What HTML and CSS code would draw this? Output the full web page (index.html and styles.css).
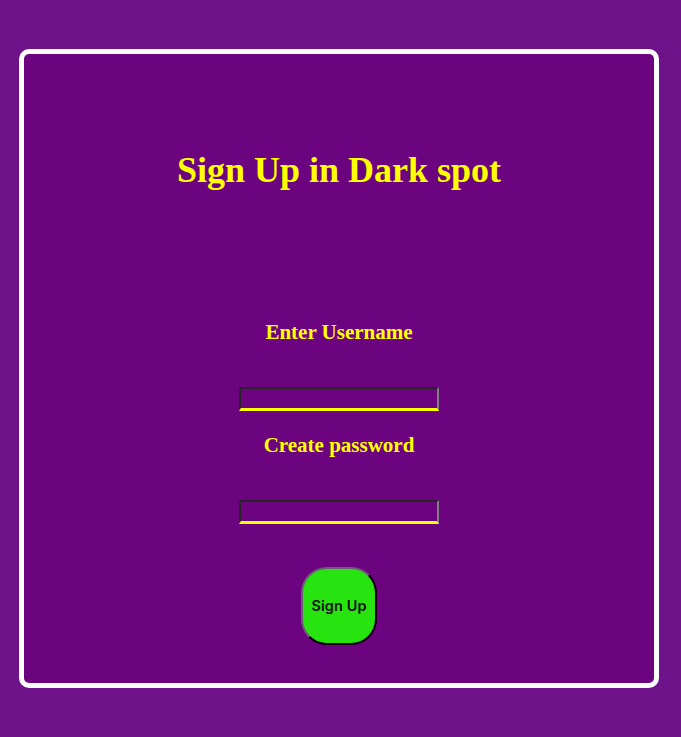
FILE: index.html
```html
<!DOCTYPE html>
<html lang="en">
<head>
<meta charset="utf-8">
<title>Sign Up in Dark spot</title>
<link rel="stylesheet" href="styles.css">
</head>
<body>
<main class="card">
  <h1 class="title">Sign Up in Dark spot</h1>
  <form class="form">
    <label class="label label-first" for="user">Enter Username</label>
    <input class="field" id="user" type="text">
    <label class="label label-next" for="pass">Create password</label>
    <input class="field" id="pass" type="password">
    <button class="btn" type="button">Sign Up</button>
  </form>
</main>
</body>
</html>
```
FILE: styles.css
```css
html, body {
  margin: 0;
  padding: 0;
}
body {
  background: #6e1289;
  padding-top: 49px;
  padding-left: 19px;
  height: 737px;
  box-sizing: border-box;
}
.card {
  width: 640px;
  height: 639px;
  box-sizing: border-box;
  border: 5px solid #ffffff;
  border-radius: 10px;
  background: #6c0480;
  display: flex;
  flex-direction: column;
  align-items: center;
}
.title {
  margin: 96px 0 0 0;
  font-family: "Liberation Serif", "Times New Roman", serif;
  font-weight: bold;
  font-size: 36px;
  line-height: 41px;
  color: #ffff00;
}
.form {
  display: flex;
  flex-direction: column;
  align-items: center;
  margin: 0;
}
.label {
  font-family: "Liberation Serif", "Times New Roman", serif;
  font-weight: bold;
  font-size: 21px;
  line-height: 24px;
  color: #ffff00;
}
.label-first {
  margin-top: 129px;
}
.label-next {
  margin-top: 22px;
}
.field {
  margin-top: 43px;
  width: 200px;
  height: 24px;
  box-sizing: border-box;
  background: transparent;
  border-style: solid;
  border-width: 2px 2px 3px 2px;
  border-top-color: #252525;
  border-left-color: #252525;
  border-right-color: #808080;
  border-bottom-color: #ffff00;
  padding: 1px 2px;
  color: #ffff00;
  outline: none;
}
.btn {
  margin-top: 43px;
  width: 76px;
  height: 78px;
  box-sizing: border-box;
  border-radius: 26px;
  background: #27e30f;
  border-style: solid;
  border-width: 2px;
  border-top-color: #6f5c7a;
  border-left-color: #6f5c7a;
  border-right-color: #000000;
  border-bottom-color: #000000;
  font-family: Inter, "Open Sans", sans-serif;
  font-weight: 600;
  font-size: 14.5px;
  letter-spacing: 0.1px;
  line-height: 16px;
  color: #111111;
  padding: 0;
  cursor: pointer;
}
```
